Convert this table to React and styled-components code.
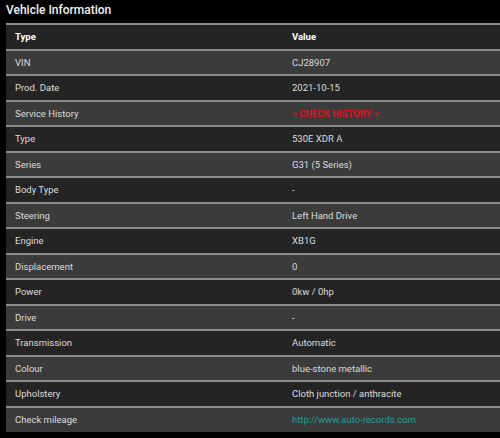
import React from 'react';
import styled, { createGlobalStyle } from 'styled-components';

const rows = [
  ['VIN', 'CJ28907'],
  ['Prod. Date', '2021-10-15'],
  ['Service History', '> CHECK HISTORY <', 'alert'],
  ['Type', '530E XDR A'],
  ['Series', 'G31 (5 Series)'],
  ['Body Type', '-'],
  ['Steering', 'Left Hand Drive'],
  ['Engine', 'XB1G'],
  ['Displacement', '0'],
  ['Power', '0kw / 0hp'],
  ['Drive', '-'],
  ['Transmission', 'Automatic'],
  ['Colour', 'blue-stone metallic'],
  ['Upholstery', 'Cloth junction / anthracite'],
  ['Check mileage', 'http://www.auto-records.com', 'link'],
];

const GlobalStyle = createGlobalStyle`
  body {
    margin: 0;
    background: #000;
    font-family: Roboto, "Liberation Sans", sans-serif;
  }
`;

const Page = styled.div`
  padding-left: 6px;
  height: 438px;
  overflow: hidden;
`;

const Title = styled.h2`
  margin: 0;
  height: 23px;
  line-height: 20px;
  font-size: 12px;
  font-weight: 500;
  color: #f2f2f2;
`;

const Table = styled.table`
  width: 100%;
  table-layout: fixed;
  border-collapse: collapse;
  font-size: 9.5px;
  color: #dcdcdc;
`;

const Row = styled.tr`
  background: ${p => (p.$light ? '#3b3b3b' : '#242424')};
  border-top: 2px solid #8c8c8c;
  height: 25.5px;
`;

const Head = styled.th`
  text-align: left;
  font-weight: 700;
  color: #fff;
  padding: 0 0 0 9px;
  width: ${p => p.$w || 'auto'};
`;

const Cell = styled.td`
  padding: 0 0 0 9px;
  white-space: nowrap;
  font-weight: ${p => (p.$kind === 'alert' ? 700 : 400)};
  color: ${p => (p.$kind === 'alert' ? '#e0101e' : p.$kind === 'link' ? '#2a9d96' : '#dcdcdc')};
`;

export default function App() {
  return (
    <Page>
      <GlobalStyle />
      <Title>Vehicle Information</Title>
      <Table>
        <thead>
          <Row>
            <Head $w="268px">Type</Head>
            <Head>Value</Head>
          </Row>
        </thead>
        <tbody>
          {rows.map(([label, value, kind], i) => (
            <Row key={label + i} $light={i % 2 === 0}>
              <Cell>{label}</Cell>
              <Cell $kind={kind}>{value}</Cell>
            </Row>
          ))}
        </tbody>
      </Table>
    </Page>
  );
}
